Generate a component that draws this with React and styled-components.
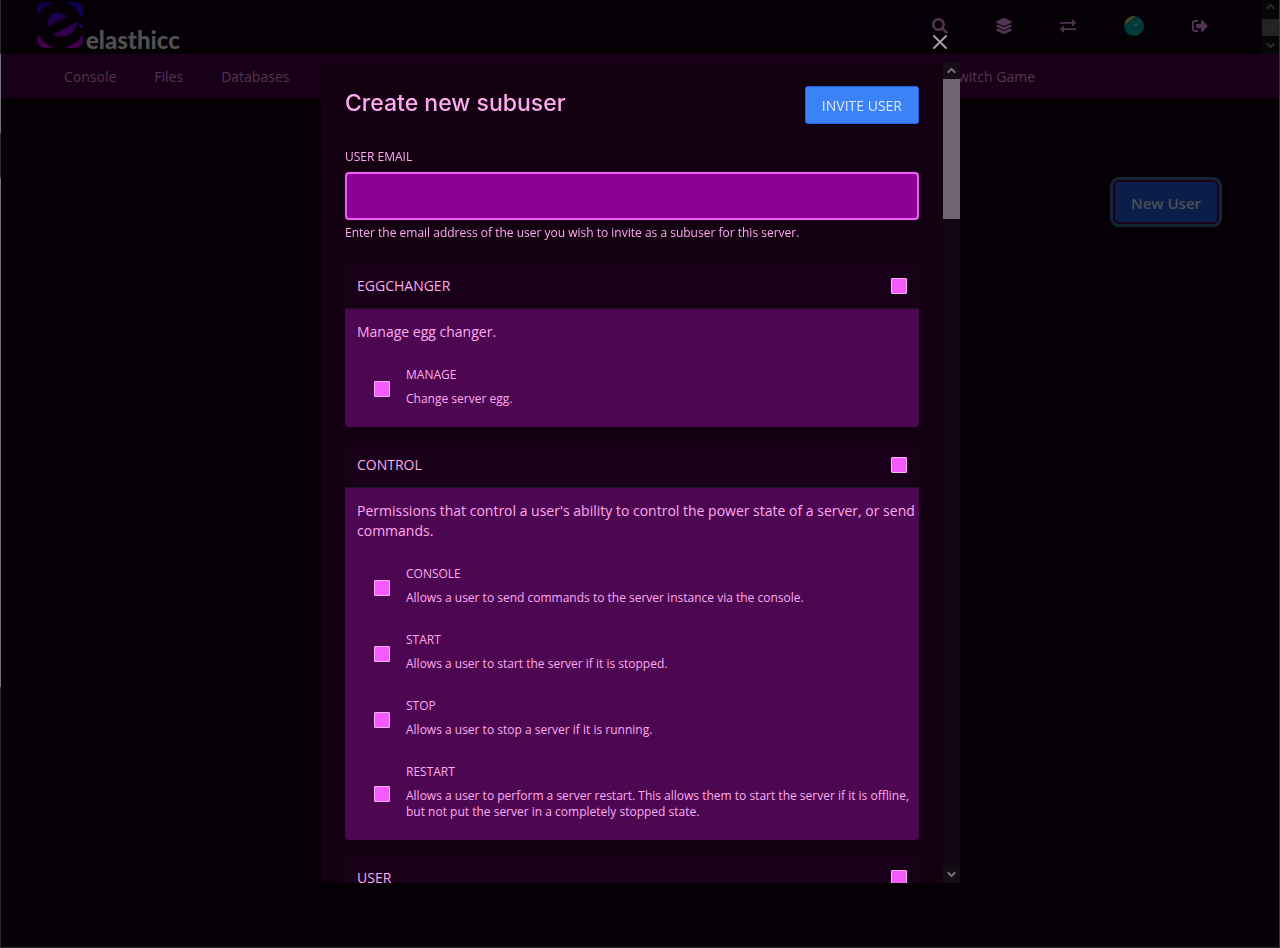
import React from "react";
import styled, { createGlobalStyle } from "styled-components";
import { FaSearch, FaLayerGroup, FaSignOutAlt } from "react-icons/fa";

const GlobalStyle = createGlobalStyle`
  *, *::before, *::after { box-sizing: border-box; }
  body {
    margin: 0;
    background: #040005;
    color: #ffaaf0;
    font-family: "Open Sans", "Noto Sans", sans-serif;
    font-size: 14px;
    line-height: 20px;
  }
  p, h2 { margin: 0; }
`;

const Page = styled.div`
  position: relative;
  min-height: 100vh;
  border-right: 1px solid #333133;
  border-bottom: 1px solid #2b292b;
  padding-left: 1px;

  &::before {
    content: "";
    position: absolute;
    inset: 0 auto 0 0;
    width: 1px;
    background: linear-gradient(#2d2d2f 54px, #747474 54px, #747474 133px, #2f2b31 133px, #2f2b31 178px, #747474 178px, #747474 687px, #2b292b 687px);
  }
`;

const TopBar = styled.header`
  display: flex;
  justify-content: space-between;
  height: 54px;
  background: #050006;
`;

const Brand = styled.a`
  display: flex;
  align-items: flex-end;
  gap: 2px;
  padding: 0 0 6px 36px;
  color: #505052;
  font-family: Lato, sans-serif;
  font-size: 24px;
  font-weight: 900;
  line-height: 16px;
  text-decoration: none;
  svg { display: block; }
`;

const TopActions = styled.div`
  display: flex;
`;

const ActionLink = styled.a`
  display: flex;
  align-items: center;
  justify-content: center;
  width: ${(p) => (p.$wide ? 68 : 64)}px;
  height: 52px;
  color: #513351;
`;

const FrameScroll = styled.div`
  display: flex;
  flex-direction: column;
  justify-content: space-between;
  align-items: center;
  width: 17px;
  margin-left: 30px;
  background: #080508;
  color: #2c292c;
  svg { display: block; margin: 3px 0 5px; }
`;

const FrameThumb = styled.div`
  width: 17px;
  height: 17px;
  background: #252225;
`;

const SubNav = styled.nav`
  display: flex;
  justify-content: space-between;
  height: 44px;
  padding: 0 225px 0 44px;
  background: #190019;
`;

const NavGroup = styled.div`
  display: flex;
`;

const NavLink = styled.a`
  padding: 13px 19px 0;
  color: #563450;
  text-decoration: none;
`;

const Content = styled.main`
  display: flex;
  justify-content: flex-end;
  padding: 84px 62px 0;
`;

const NewUserButton = styled.button`
  height: 40px;
  padding: 2px 16px 0;
  border: 0;
  border-radius: 4px;
  background: #0b1d49;
  box-shadow: 0 0 0 2px #1c0019, 0 0 0 5px #142537;
  color: #4b4f57;
  font: 600 15px/20px "Open Sans", sans-serif;
`;

const Overlay = styled.div`
  position: fixed;
  inset: 0 0 0 1px;
  display: flex;
  justify-content: center;
  align-items: flex-start;
  padding-top: 62px;
`;

const Modal = styled.div`
  position: relative;
  display: flex;
  width: calc(50vw - 1px);
  height: calc(100vh - 127px);
  border-radius: 4px 0 0 4px;
  background: #130010;
`;

const CloseButton = styled.button`
  position: absolute;
  top: -32px;
  right: 8px;
  width: 24px;
  height: 24px;
  padding: 0;
  border: 0;
  background: none;
  color: #a39fa4;
  svg { display: block; }
`;

const ModalBody = styled.form`
  flex: 1;
  min-width: 0;
  overflow: hidden;
  padding: 24px;
`;

const ModalHeader = styled.div`
  display: flex;
  justify-content: space-between;
  margin-bottom: 25px;
`;

const Title = styled.h2`
  color: #ffaaf0;
  font: 500 23px/34px Inter, sans-serif;
`;

const InviteButton = styled.button`
  height: 38px;
  padding: 1px 16px 0;
  border: 1px solid #2563eb;
  border-radius: 3px;
  background: #3b82f6;
  color: #dbeafe;
  font: 400 14px/20px "Open Sans", sans-serif;
  text-transform: uppercase;
`;

const FieldLabel = styled.label`
  display: block;
  margin-bottom: 7px;
  font-size: 12px;
  line-height: 16px;
  text-transform: uppercase;
`;

const EmailInput = styled.input`
  display: block;
  width: 100%;
  height: 48px;
  padding: 12px;
  border: 2px solid #f25cff;
  border-radius: 4px;
  outline: 0;
  background: #8c0096;
  color: #ffd5fa;
  font: inherit;
`;

const Help = styled.p`
  margin: 5px 0 23px;
  font-size: 12px;
  line-height: 16px;
`;

const Sections = styled.div`
  display: grid;
  gap: 16px;
`;

const Section = styled.section`
  border-radius: 4px;
  overflow: hidden;
`;

const SectionHeader = styled.label`
  display: flex;
  justify-content: space-between;
  align-items: center;
  padding: 12px;
  border-bottom: 1px solid #1b171f;
  background: #170018;
  text-transform: uppercase;
`;

const SectionBody = styled.div`
  padding: 13px 0 13px 12px;
  background: #4d0752;
`;

const Permissions = styled.div`
  display: grid;
  gap: 16px;
  margin-top: 22px;
`;

const Permission = styled.label`
  display: flex;
  align-items: center;
  gap: 16px;
  padding-left: 17px;
`;

const PermissionText = styled.span`
  display: grid;
  gap: 8px;
  padding: 3px 0 7px;
  font-size: 12px;
  line-height: 16px;
`;

const PermissionName = styled.span`
  text-transform: uppercase;
`;

const Checkbox = styled.input.attrs({ type: "checkbox" })`
  appearance: none;
  flex: none;
  width: 16px;
  height: 16px;
  margin: 0;
  border: 1px solid #ffb0f5;
  border-radius: 1px;
  background: #f25cff;
`;

const Scrollbar = styled.div`
  display: flex;
  flex-direction: column;
  width: 17px;
  background: #140514;
`;

const ScrollArrow = styled.div`
  display: flex;
  align-items: center;
  justify-content: center;
  height: 17px;
  background: #150e16;
  color: #77707a;
`;

const ScrollThumb = styled.div`
  height: 17%;
  margin-bottom: auto;
  background: #706672;
`;

const Logo = () => (
  <svg width="47" height="47" viewBox="0 0 47 47" aria-hidden="true">
    <defs>
      <linearGradient id="brand" gradientUnits="userSpaceOnUse" x1="0" y1="0" x2="0" y2="47">
        <stop offset="0" stopColor="#07004f" />
        <stop offset="0.5" stopColor="#25004e" />
        <stop offset="1" stopColor="#4a004c" />
      </linearGradient>
    </defs>
    <g fill="url(#brand)">
      <path d="M.5 14V10Q.5 1 10 1H17Q6 4 .5 14Z" />
      <path d="M28 1H37Q46 1 46 10V15L44 16Q40 5 28 1Z" />
      <path d="M.5 33V38Q.5 47 10 47H17Q6 43 .5 33Z" />
      <path d="M46 33V38Q46 47 37 47H27Q41 43 46 33Z" />
      <path d="M11 25C10 10 24 8 29.500 16Z" />
      <path d="M16 33.500L40 21L46 25V28L40 23C37 34 25 39 16 33.500Z" />
    </g>
  </svg>
);

const ExchangeIcon = () => (
  <svg width="16" height="16" viewBox="0 0 16 16" fill="currentColor" aria-hidden="true">
    <path d="M.5 4H12V1.800Q12 1 12.700 1.500L15.700 4.300Q16.200 4.800 15.700 5.300L12.700 8Q12 8.500 12 7.700V5.800H.5Q0 5.800 0 5.300V4.500Q0 4 .5 4Z" />
    <path d="M15.500 10.200H4V8.300Q4 7.500 3.300 8L.3 10.700Q-.2 11.200 .3 11.700L3.300 14.500Q4 15 4 14.200V12H15.500Q16 12 16 11.500V10.700Q16 10.200 15.500 10.200Z" />
  </svg>
);

const Avatar = () => (
  <svg width="20" height="20" viewBox="0 0 20 20" aria-hidden="true">
    <defs><clipPath id="face"><circle cx="10" cy="10" r="10" /></clipPath></defs>
    <g clipPath="url(#face)">
      <rect width="20" height="20" fill="#033a39" />
      <path d="M0 0H12L0 9Z" fill="#51421a" />
      <circle cx="9" cy="6" r="0.5" fill="#4a6668" />
      <circle cx="15" cy="5" r="0.5" fill="#4a6668" />
      <path d="M10 8Q12 11 14 8" fill="none" stroke="#4a6668" strokeWidth="0.8" />
    </g>
  </svg>
);

const Chevron = ({ down }) => (
  <svg width="9" height="7" viewBox="0 0 9 7" fill="none" stroke="currentColor" strokeWidth="2" aria-hidden="true">
    <path d={down ? "M.7 1.2L4.5 5L8.3 1.2" : "M.7 5.8L4.5 2L8.3 5.8"} />
  </svg>
);

const sections = [
  {
    name: "Eggchanger",
    about: "Manage egg changer.",
    items: [["Manage", "Change server egg."]],
  },
  {
    name: "Control",
    about: "Permissions that control a user's ability to control the power state of a server, or send commands.",
    items: [
      ["Console", "Allows a user to send commands to the server instance via the console."],
      ["Start", "Allows a user to start the server if it is stopped."],
      ["Stop", "Allows a user to stop a server if it is running."],
      ["Restart", "Allows a user to perform a server restart. This allows them to start the server if it is offline, but not put the server in a completely stopped state."],
    ],
  },
  { name: "User", items: [] },
];

export default function App() {
  return (
    <>
      <GlobalStyle />
      <Page>
        <TopBar>
          <Brand href="#"><Logo />elasthicc</Brand>
          <TopActions>
            <ActionLink href="#" aria-label="Search"><FaSearch size={16} /></ActionLink>
            <ActionLink href="#" aria-label="Servers"><FaLayerGroup size={16} /></ActionLink>
            <ActionLink href="#" aria-label="Switch"><ExchangeIcon /></ActionLink>
            <ActionLink href="#" $wide aria-label="Account"><Avatar /></ActionLink>
            <ActionLink href="#" aria-label="Sign out"><FaSignOutAlt size={16} /></ActionLink>
            <FrameScroll><Chevron /><FrameThumb /><Chevron down /></FrameScroll>
          </TopActions>
        </TopBar>
        <SubNav>
          <NavGroup>
            <NavLink href="#">Console</NavLink>
            <NavLink href="#">Files</NavLink>
            <NavLink href="#">Databases</NavLink>
          </NavGroup>
          <NavGroup>
            <NavLink href="#">Switch Game</NavLink>
          </NavGroup>
        </SubNav>
        <Content>
          <NewUserButton type="button">New User</NewUserButton>
        </Content>
      </Page>

      <Overlay>
        <Modal role="dialog" aria-labelledby="modal-title">
          <CloseButton type="button" aria-label="Close">
            <svg width="24" height="24" viewBox="0 0 24 24" fill="none" stroke="currentColor" strokeWidth="2" strokeLinecap="round">
              <path d="M6 6L18 18M18 6L6 18" />
            </svg>
          </CloseButton>
          <ModalBody>
            <ModalHeader>
              <Title id="modal-title">Create new subuser</Title>
              <InviteButton type="submit">Invite User</InviteButton>
            </ModalHeader>
            <FieldLabel htmlFor="email">User Email</FieldLabel>
            <EmailInput id="email" type="email" />
            <Help>Enter the email address of the user you wish to invite as a subuser for this server.</Help>
            <Sections>
              {sections.map((section) => (
                <Section key={section.name}>
                  <SectionHeader>{section.name}<Checkbox /></SectionHeader>
                  {section.about && (
                    <SectionBody>
                      <p>{section.about}</p>
                      <Permissions>
                        {section.items.map(([name, text]) => (
                          <Permission key={name}>
                            <Checkbox />
                            <PermissionText>
                              <PermissionName>{name}</PermissionName>
                              <span>{text}</span>
                            </PermissionText>
                          </Permission>
                        ))}
                      </Permissions>
                    </SectionBody>
                  )}
                </Section>
              ))}
            </Sections>
          </ModalBody>
          <Scrollbar aria-hidden="true">
            <ScrollArrow><Chevron /></ScrollArrow>
            <ScrollThumb />
            <ScrollArrow><Chevron down /></ScrollArrow>
          </Scrollbar>
        </Modal>
      </Overlay>
    </>
  );
}
